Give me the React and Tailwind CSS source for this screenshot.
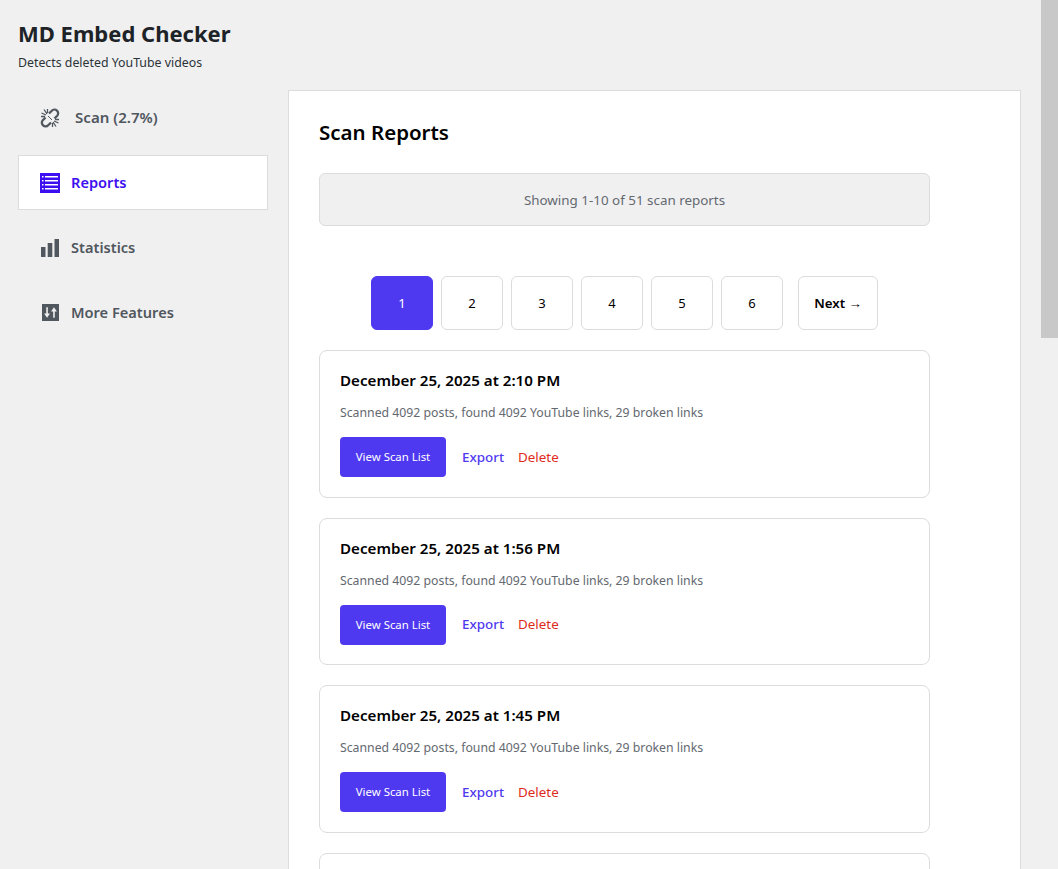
import React from 'react';

const reports = [
  'December 25, 2025 at 2:10 PM',
  'December 25, 2025 at 1:56 PM',
  'December 25, 2025 at 1:45 PM',
];

const ScanIcon = () => (
  <svg viewBox="0 0 20 20" className="w-5 h-5" fill="none" stroke="#50575e">
    <path d="M9 5.500 11.800 2.800a3.500 3.500 0 0 1 5.400 4.900L14.500 10.500" strokeWidth="2.300" />
    <path d="M11 14.500 8.200 17.200a3.500 3.500 0 0 1-5.400-4.900L5.500 9.500" strokeWidth="2.300" />
    <path d="M1.500 5 6 7M4 1.500 7 6M1 8.500h4M7.500 1v4" strokeWidth="1.300" />
    <path d="M18.500 15 14 13M16 18.500 13 14M19 11.500h-4M12.500 19v-4" strokeWidth="1.300" />
    <path d="M8 8l4 4" strokeWidth="1" />
  </svg>
);

const ReportsIcon = () => (
  <svg viewBox="0 0 20 20" className="w-5 h-5" fill="#3d0ff0">
    <path
      fillRule="evenodd"
      d="M0 0h20v20H0z M2 3h1.500v1.500H2z M5 3h13v1.500H5z M2 7h1.500v1.500H2z M5 7h13v1.500H5z M2 11h1.500v1.500H2z M5 11h13v1.500H5z M2 15h1.500v1.500H2z M5 15h13v1.500H5z"
    />
  </svg>
);

const StatsIcon = () => (
  <svg viewBox="0 0 18 18" className="w-[18px] h-[18px]" fill="#50575e">
    <path d="M0 8h4.500v10H0zM6.700 4h4.600v14H6.700zM13.500 0H18v18h-4.500z" />
  </svg>
);

const FeaturesIcon = () => (
  <svg viewBox="0 0 16 16" className="w-[17px] h-[17px]" fill="#50575e">
    <path
      fillRule="evenodd"
      d="M0 0h16v16H0z M4 3h1.500v6H7.500L4.750 13 2 9h2z M10.500 13H12V7h2L11.250 3 8.500 7h2z"
    />
  </svg>
);

const NavItem = ({ icon, label, active, labelClass = 'ml-[11px]' }) => (
  <div
    className={`h-[55px] flex items-center pl-[21px] border text-[14.6px] font-semibold ${
      active ? 'bg-white border-[#dcdcde] text-[#3d0ff0]' : 'border-transparent text-[#50575e]'
    }`}
  >
    <span className="w-5 flex justify-center shrink-0">{icon}</span>
    <span className={labelClass}>{label}</span>
  </div>
);

const PageButton = ({ children, active }) => (
  <div
    className={`w-[62px] h-[54px] pt-0.5 rounded-md flex items-center justify-center text-[13px] border ${
      active ? 'bg-[#4f39f0] border-[#4f39f0] text-white' : 'bg-white border-[#dcdcde] text-black'
    }`}
  >
    {children}
  </div>
);

const ReportCard = ({ date }) => (
  <div className="w-[611px] h-[147.5px] shrink-0 bg-white border border-[#dcdcde] rounded-lg pt-[19px] pl-5">
    <h3 className="text-[15.15px] leading-5 font-semibold text-black">{date}</h3>
    <p className="mt-[13px] text-[12.27px] leading-5 text-[#646970]">
      Scanned 4092 posts, found 4092 YouTube links, 29 broken links
    </p>
    <div className="mt-[14px] flex items-center">
      <div className="w-[106px] h-10 rounded-sm bg-[#4f39f0] text-white text-[11.4px] flex items-center justify-center">
        View Scan List
      </div>
      <span className="ml-4 text-[13.4px] font-medium text-[#4f39f0]">Export</span>
      <span className="ml-[14px] text-[13.4px] text-[#e02b1a]">Delete</span>
    </div>
  </div>
);

export default function App() {
  return (
    <div className="h-[869px] overflow-hidden flex bg-[#f0f0f1] font-['Noto_Sans','Open_Sans',sans-serif]">
      <div className="flex-1 min-w-0 pl-[18px]">
        <header className="h-[90px] pt-[17px]">
          <h1 className="text-[22px] leading-8 font-bold text-[#1d2327]">MD Embed Checker</h1>
          <p className="mt-1 text-[12.33px] leading-5 text-[#2c3338]">Detects deleted YouTube videos</p>
        </header>

        <div className="flex">
          <nav className="w-[250px] shrink-0 flex flex-col gap-[10px]">
            <NavItem icon={<ScanIcon />} label="Scan (2.7%)" labelClass="ml-[15px] text-[15.1px]" />
            <NavItem icon={<ReportsIcon />} label="Reports" active />
            <NavItem icon={<StatsIcon />} label="Statistics" />
            <NavItem icon={<FeaturesIcon />} label="More Features" />
          </nav>

          <main className="ml-5 w-[733px] h-[779px] overflow-hidden shrink-0 bg-white border border-[#dcdcde] border-b-0 pt-[25px] pl-[30px]">
            <h2 className="text-[20.5px] leading-8 font-semibold text-black">Scan Reports</h2>

            <div className="mt-[25px] w-[611px] h-[53px] pt-0.5 rounded-md bg-[#f0f0f1] border border-[#dcdcde] flex items-center justify-center text-[13.4px] text-[#646970]">
              Showing 1-10 of 51 scan reports
            </div>

            <div className="mt-[50px] w-[611px] flex justify-center">
              <div className="flex gap-2">
                <PageButton active>1</PageButton>
                <PageButton>2</PageButton>
                <PageButton>3</PageButton>
                <PageButton>4</PageButton>
                <PageButton>5</PageButton>
                <PageButton>6</PageButton>
              </div>
              <div className="ml-[15px] w-20 h-[54px] pt-0.5 rounded-md bg-white border border-[#dcdcde] flex items-center justify-center text-[13.3px] font-semibold text-black">
                Next →
              </div>
            </div>

            <div className="mt-5 flex flex-col gap-5">
              {reports.map((date) => (
                <ReportCard key={date} date={date} />
              ))}
              {/* next card starts right at the fold */}
              <div className="w-[611px] h-[147.5px] shrink-0 bg-white border border-[#dcdcde] rounded-lg" />
            </div>
          </main>
        </div>
      </div>

      <div className="w-[17px] shrink-0 bg-[#f0f0f1]">
        <div className="h-[338px] bg-[#c8c8c8]" />
      </div>
    </div>
  );
}
